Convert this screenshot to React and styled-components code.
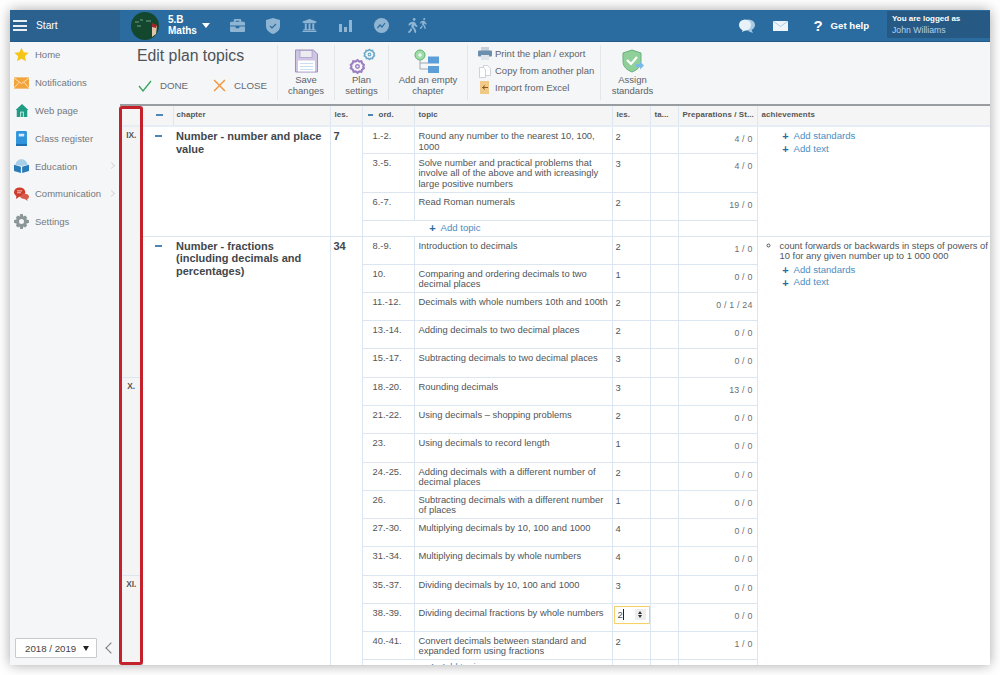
import React from 'react';
import styled, { createGlobalStyle } from 'styled-components';
import { FaBriefcase, FaUniversity, FaWalking } from 'react-icons/fa';

const Global = createGlobalStyle`
  html, body { margin: 0; padding: 0; background: #fff; }
  body { font-family: "Liberation Sans", Arial, sans-serif; color: #444; overflow: hidden; }
  * { box-sizing: border-box; }
`;

const Page = styled.div`
  width: 1000px; height: 675px; padding: 10px; background: #fff;
`;
const Win = styled.div`
  position: relative; width: 980px; height: 655px; display: flex; flex-direction: column;
  overflow: hidden; background: #fff; box-shadow: 0 0 12px rgba(0,0,0,.35);
`;
const TopBar = styled.header`
  flex: 0 0 32px; display: flex; align-items: stretch; background: #2b6ca0; color: #fff;
  border-bottom: 1px solid #235b88;
`;
const StartBox = styled.div`
  width: 110px; display: flex; align-items: center; gap: 9px; padding-left: 3px;
  background: #2a618f; font-size: 10.2px;
`;
const Burger = styled.span`
  width: 14px; height: 11px; border-top: 2px solid #e8f0f6; border-bottom: 2px solid #e8f0f6; position: relative;
  &::after { content: ""; position: absolute; left: 0; right: 0; top: 2.5px; height: 2px; background: #e8f0f6; }
`;
const ClassBox = styled.div`
  display: flex; align-items: center; margin-left: 11px;
`;
const ClassName = styled.div`
  margin-left: 9px; font-size: 10px; font-weight: 700; line-height: 10.5px; width: 34px;
`;
const Caret = styled.span`
  width: 0; height: 0; border-left: 4.5px solid transparent; border-right: 4.5px solid transparent;
  border-top: 5px solid #fff; margin-right: 17px;
`;
const NavIcons = styled.div`
  display: flex; align-items: center; gap: 16px; color: #8fb5d3;
`;
const NavSlot = styled.span`
  width: 20px; display: flex; justify-content: center;
`;
const RightBar = styled.div`
  margin-left: auto; display: flex; align-items: center;
`;
const HelpLabel = styled.span`
  display: flex; align-items: center; gap: 8px; font-size: 9.6px; font-weight: 700; margin: 0 18px 0 25px;
`;
const QMark = styled.span`font-size: 15px;`;
const Logged = styled.div`
  width: 103px; height: 27px; margin-top: 1px; padding: 3px 0 0 5px; background: #265a84; font-size: 8px; line-height: 10.5px;
  font-weight: 700; align-self: flex-start;
`;
const LoggedName = styled.div`
  font-weight: 400; color: #b4d0e8; font-size: 8.7px;
`;

const Body = styled.div`
  flex: 1; display: flex; min-height: 0;
`;
const Side = styled.aside`
  width: 110px; flex: none; background: #f5f6f8; display: flex; flex-direction: column; position: relative;
`;
const MenuList = styled.nav`
  margin-top: -1px;
`;
const MenuItem = styled.div`
  height: 27.8px; display: flex; align-items: center; padding-left: 3px; font-size: 9.5px; color: #727980; position: relative;
`;
const MenuIcon = styled.span`
  width: 17px; height: 17px; display: flex; align-items: center; justify-content: center; margin-right: 5px;
`;
const Chevron = styled.span`
  position: absolute; right: 6px; top: 11px; width: 5px; height: 5px; border-top: 1px solid #d5d8db; border-right: 1px solid #d5d8db; transform: rotate(45deg);
`;
const SideFoot = styled.div`
  margin-top: auto; display: flex; align-items: center; gap: 6px; padding: 0 0 7px 5px;
`;
const YearSelect = styled.div`
  width: 82px; height: 20px; border: 1px solid #c8cbce; background: #fff; font-size: 9.7px; color: #444;
  display: flex; align-items: center; justify-content: space-between; padding: 0 7px 0 9px; border-radius: 1px;
`;
const SmallCaret = styled.span`
  width: 0; height: 0; border-left: 3px solid transparent; border-right: 3px solid transparent; border-top: 5px solid #222;
`;
const Collapse = styled.span`
  display: block; width: 8px; height: 8px; margin-left: 4px; border-left: 1.5px solid #6f7b85; border-bottom: 1.5px solid #6f7b85; transform: rotate(45deg);
`;

const Main = styled.main`
  flex: 1; min-width: 0; display: flex; flex-direction: column;
`;
const Toolbar = styled.div`
  flex: 0 0 64px; background: #f5f6f8; border-bottom: 2px solid #9a9da0; display: flex; padding-top: 3px; padding-bottom: 4px;
`;
const TitleGroup = styled.div`
  width: 157px; padding: 1px 0 0 17px; flex: none;
`;
const Title = styled.div`
  font-size: 15.8px; line-height: 20px; color: #4d5357;
`;
const Actions = styled.div`
  display: flex; align-items: center; gap: 25px; margin-top: 13px; padding-left: 1px; font-size: 9.7px; color: #646a70;
`;
const Action = styled.span`
  display: flex; align-items: center; gap: 8px;
`;
const ToolGroup = styled.div`
  border-left: 1px solid #e4e6e9; display: flex; flex-direction: column; align-items: center; flex: none;
  width: ${p => p.$w}px; font-size: 9.5px; line-height: 10.5px; color: #5d6369; text-align: center; padding-top: 4px;
`;
const ToolIcon = styled.div`
  height: 24px; display: flex; align-items: center; justify-content: center; margin-bottom: 2px; position: relative;
  width: ${p => p.$w ? p.$w + 'px' : 'auto'};
`;
const GearSpot = styled.span`
  position: absolute; display: flex;
  ${p => p.$big ? 'left: 0; bottom: -2px;' : 'right: -1px; top: -1px;'}
`;
const ListGroup = styled.div`
  border-left: 1px solid #e4e6e9; width: 133px; flex: none; display: flex; flex-direction: column; padding: 0 0 0 10px;
`;
const ListRow = styled.div`
  height: 17px; display: flex; align-items: center; gap: 3px; font-size: 9.5px; color: #5d6369; white-space: nowrap;
`;

const TableWrap = styled.div`
  flex: 1; min-height: 0; overflow: hidden;
`;
const Grid = styled.table`
  table-layout: fixed; border-collapse: collapse; width: 871px; margin-left: -1px;
`;
const Th = styled.th`
  height: 20px; background: #f5f5f6; font-size: 7.9px; font-weight: 700; letter-spacing: .1px; color: #555; text-align: left;
  padding: 0 0 3px ${p => p.$pl ?? 4}px; border-right: 1px solid #dde7f2; border-bottom: 2px solid #e6edf5;
  white-space: nowrap; overflow: hidden; text-overflow: ellipsis;
`;
const Td = styled.td`
  border: 1px solid #dbe6f1; vertical-align: top; font-size: 9.4px; line-height: 10.6px; color: #50555a; padding: 4px 2px 0 4px;
  height: ${p => p.$h}px;
`;
const MarkerTd = styled(Td)`
  background: #f4f4f5; font-size: 8.3px; font-weight: 700; text-align: center; color: #555; padding: 3px 0 0 2px;
  border-left: 0;
`;
const MinusCell = styled(Td)`
  border-right: 0;
`;
const TitleCell = styled(Td)`
  border-left: 0; padding: 3px 2px 0 3px;
`;
const LesTitleCell = styled(Td)`
  padding: 3px 2px 0 3px;
`;
const Minus = styled.span`
  display: block; width: 7px; height: 2px; background: #4a86b8; margin: ${p => p.$m || '4px auto 0'};
`;
const ChapterTitle = styled.div`
  font-size: 11px; font-weight: 700; line-height: 12.6px; color: #42474b;
`;
const OrdTd = styled(Td)`
  padding-left: 10px; color: #555;
`;
const PrepTd = styled(Td)`
  text-align: right; padding: 7px 4px 0 0; color: #6a6f74; font-size: 8.8px; letter-spacing: .2px;
`;
const LesTd = styled(Td)`
  padding: 5px 2px 0 3px;
`;
const AddCell = styled(Td)`
  padding: 1px 0 0;
`;
const LinksCell = styled(Td)`
  padding-top: 3px;
`;
const AddLink = styled.div`
  display: flex; align-items: center; gap: 4px; color: #4c8dbf; font-size: 9.6px; line-height: 12.6px;
  padding-left: ${p => p.$pl || 20}px;
`;
const Plus = styled.span`
  color: #2b6ca0; font-weight: 700; font-size: 11px; width: 8px; line-height: 10px; text-align: center;
`;
const Bullet = styled.ul`
  margin: 1px 0 2px 0; padding: 0 0 0 18px; font-size: 9.4px; line-height: 10.6px; list-style: circle; width: 232px; color: #50555a;
`;
const HeadOrd = styled.span`
  display: inline-flex; align-items: center; gap: 6px; padding-left: 1px;
`;
const HeadMinus = styled.span`
  display: inline-block; width: 5px; height: 1.5px; background: #4a86b8;
`;
const NumInput = styled.div`
  width: 36px; height: 18px; margin: -3px 0 0 -2px; border: 1px solid #f6d169; border-radius: 1px; display: flex; align-items: center;
  justify-content: space-between; padding: 0 3px; background: #fff; box-shadow: 0 0 1px #f6d169;
`;
const Caretline = styled.span`
  font-size: 9.4px; border-right: 1px solid #222; line-height: 11px;
`;
const Spin = styled.span`
  width: 11px; height: 11px; background: #eee; display: flex; flex-direction: column; align-items: center; justify-content: center; gap: 1px;
  &::before { content: ""; border-left: 2.5px solid transparent; border-right: 2.5px solid transparent; border-bottom: 3px solid #333; }
  &::after { content: ""; border-left: 2.5px solid transparent; border-right: 2.5px solid transparent; border-top: 3px solid #333; }
`;
const RedFrame = styled.div`
  position: absolute; left: 109px; top: 96px; width: 24px; height: 559px; border: 3px solid #c4212b; border-radius: 3px; pointer-events: none;
`;
const ShiftedSvg = styled.svg`
  margin-left: 18px;
`;

const menu = [
  ['Home', <svg width="15" height="15" viewBox="0 0 24 24"><path fill="#f5c518" d="M12 1l3.4 7.4 8 .9-6 5.4 1.7 8L12 18.6 4.900 22.700l1.700-8-6-5.400 8-.9z"/></svg>],
  ['Notifications', <svg width="15" height="12" viewBox="0 0 24 18"><rect width="24" height="18" fill="#f3a33c"/><path d="M0 1l12 9 12-9M0 17l8-9M24 17l-8-9" stroke="#fde3b6" strokeWidth="1.500" fill="none"/></svg>],
  ['Web page', <svg width="14" height="15" viewBox="0 0 24 24"><path fill="#1f9c83" d="M12 1l11 10h-2v12H3V11H1z"/><path fill="#dff3ee" d="M9 14h6v9H9z"/><path fill="#1f9c83" d="M10.500 15.500h3V23h-3z"/></svg>],
  ['Class register', <svg width="11" height="15" viewBox="0 0 16 22"><rect width="16" height="22" rx="2" fill="#2f94dc"/><rect x="4" y="4" width="8" height="4" fill="#d6ebfa"/><rect x="0" y="19" width="16" height="3" fill="#1e6fae"/></svg>],
  ['Education', <svg width="15" height="14" viewBox="0 0 24 22"><path fill="#a7cfe9" d="M2 9C3 3 8 0 12 0s9 3 10 9l-10 2z"/><path fill="#2a7cb8" d="M0 9l11 3v10L0 19zM24 9l-11 3v10l11-3z"/></svg>, true],
  ['Communication', <svg width="15" height="14" viewBox="0 0 24 22"><ellipse cx="9" cy="8" rx="9" ry="7.500" fill="#cf3b2c"/><path d="M4 13l-1 6 6-4z" fill="#cf3b2c"/><path fill="#d85a49" d="M14 10c6 0 10 2 10 5s-2 4-3 4l1 3-5-3c-4 0-7-2-7-4z"/><path stroke="#f6d5cf" strokeWidth="1.500" d="M5 6h8M5 9h6"/></svg>, true],
  ['Settings', <svg width="15" height="15" viewBox="0 0 24 24"><path fill="#8a9697" fillRule="evenodd" d="M10 0h4l1 4 3-1.500 3 3L19.500 8.500 24 10v4l-4.500 1.500L21 18.500l-3 3-3-1.500-1 4h-4l-1-4-3 1.500-3-3 1.500-3L0 14v-4l4.500-1.500L3 5.500l3-3L9 4zM12 8a4 4 0 100 8 4 4 0 000-8z"/></svg>],
];

const PlusRow = ({ children, pl }) => <AddLink $pl={pl}><Plus>+</Plus>{children}</AddLink>;

const Gear = ({ c, s }) => (
  <svg width={s} height={s} viewBox="0 0 24 24"><path fill="none" stroke={c} strokeWidth="3" d="M12 3l2.500 2 3-.5 1 3 2.500 2-1 2.500 1 2.500-2.500 2-1 3-3-.5-2.500 2-2.500-2-3 .5-1-3L2.500 14.500l1-2.500-1-2.500 2.500-2 1-3 3 .5z"/><circle cx="12" cy="12" r="2.500" fill="none" stroke={c} strokeWidth="2"/></svg>
);

const ch1 = [
  ['1.-2.', 'Round any number to the nearest 10, 100, 1000', 2, '4 / 0', 27],
  ['3.-5.', 'Solve number and practical problems that involve all of the above and with icreasingly large positive numbers', 3, '4 / 0', 39],
  ['6.-7.', 'Read Roman numerals', 2, '19 / 0', 28],
];
const ch2 = [
  ['8.-9.', 'Introduction to decimals', 2, '1 / 0', 28],
  ['10.', 'Comparing and ordering decimals to two decimal places', 1, '0 / 0', 28],
  ['11.-12.', 'Decimals with whole numbers 10th and 100th', 2, '0 / 1 / 24', 28],
  ['13.-14.', 'Adding decimals to two decimal places', 2, '0 / 0', 28],
  ['15.-17.', 'Subtracting decimals to two decimal places', 3, '0 / 0', 29],
  ['18.-20.', 'Rounding decimals', 3, '13 / 0', 28],
  ['21.-22.', 'Using decimals – shopping problems', 2, '0 / 0', 28],
  ['23.', 'Using decimals to record length', 1, '0 / 0', 29],
  ['24.-25.', 'Adding decimals with a different number of decimal places', 2, '0 / 0', 28],
  ['26.', 'Subtracting decimals with a different number of places', 1, '0 / 0', 28],
  ['27.-30.', 'Multiplying decimals by 10, 100 and 1000', 4, '0 / 0', 28],
  ['31.-34.', 'Multiplying decimals by whole numbers', 4, '0 / 0', 29],
  ['35.-37.', 'Dividing decimals by 10, 100 and 1000', 3, '0 / 0', 28],
  ['38.-39.', 'Dividing decimal fractions by whole numbers', 2, '0 / 0', 28, true],
  ['40.-41.', 'Convert decimals between standard and expanded form using fractions', 2, '1 / 0', 28],
];

const TopicCells = ({ r }) => (
  <>
    <OrdTd $h={r[4]}>{r[0]}</OrdTd>
    <Td>{r[1]}</Td>
    <LesTd>{r[5] ? <NumInput><Caretline>{r[2]}</Caretline><Spin /></NumInput> : r[2]}</LesTd>
    <Td />
    <PrepTd>{r[3]}</PrepTd>
  </>
);

const AddTopicRow = ({ h }) => (
  <tr>
    <AddCell $h={h} colSpan={2}><PlusRow pl={66}>Add topic</PlusRow></AddCell>
    <Td /><Td /><Td />
  </tr>
);

export default function App() {
  return (
    <Page>
      <Global />
      <Win>
        <TopBar>
          <StartBox><Burger /> Start</StartBox>
          <ClassBox>
            <svg width="28" height="28" viewBox="0 0 28 28"><circle cx="14" cy="14" r="14" fill="#13482f"/><path d="M4 10h4M9 8h3M15 9h5M6 14h4" stroke="#8fb79f" strokeWidth=".8"/><path d="M21 12l5 2-1 8-4 3z" fill="#e0c4ae"/><path d="M21 11l5 2-1 3-4-1z" fill="#a8242b"/></svg>
            <ClassName>5.B<br />Maths</ClassName>
            <Caret />
            <NavIcons>
              <NavSlot><FaBriefcase size={15} /></NavSlot>
              <NavSlot><svg width="14" height="16" viewBox="0 0 14 16"><path fill="currentColor" d="M7 0l7 2v6c0 4-3 6.500-7 8-4-1.500-7-4-7-8V2z"/><path d="M4 8l2 2 4-4" stroke="#2b6ca0" strokeWidth="1.200" fill="none"/></svg></NavSlot>
              <NavSlot><FaUniversity size={15} /></NavSlot>
              <NavSlot><svg width="13" height="13" viewBox="0 0 13 13"><path fill="currentColor" d="M0 5h3v8H0zM5 8h3v5H5zM10 1h3v12h-3z"/></svg></NavSlot>
              <NavSlot><svg width="15" height="15" viewBox="0 0 15 15"><circle cx="7.500" cy="7.500" r="7.500" fill="currentColor"/><path d="M3.500 10l2.500-3 2 2 3-4" stroke="#2b6ca0" strokeWidth="1.200" fill="none"/></svg></NavSlot>
              <NavSlot><FaWalking size={15} /><FaWalking size={11} /></NavSlot>
            </NavIcons>
          </ClassBox>
          <RightBar>
            <svg width="16" height="14" viewBox="0 0 16 14"><ellipse cx="9.500" cy="6" rx="6.500" ry="5.500" fill="#a9cbe4"/><path d="M12 10l2 4-5-2z" fill="#a9cbe4"/><ellipse cx="6" cy="6" rx="6" ry="5.500" fill="#e9f2f8"/><path d="M4 10l-1 3 4-2z" fill="#e9f2f8"/></svg>
            <ShiftedSvg width="15" height="10" viewBox="0 0 15 10"><rect width="15" height="10" fill="#eef5fa"/><path d="M0 0l7.500 5.500L15 0" stroke="#9fc0da" strokeWidth=".8" fill="none"/></ShiftedSvg>
            <HelpLabel><QMark>?</QMark>Get help</HelpLabel>
            <Logged>You are logged as<LoggedName>John Williams</LoggedName></Logged>
          </RightBar>
        </TopBar>
        <Body>
          <Side>
            <MenuList>
              {menu.map(([t, ic, ch]) => (
                <MenuItem key={t}><MenuIcon>{ic}</MenuIcon>{t}{ch && <Chevron />}</MenuItem>
              ))}
            </MenuList>
            <SideFoot><YearSelect>2018 / 2019<SmallCaret /></YearSelect><Collapse /></SideFoot>
          </Side>
          <Main>
            <Toolbar>
              <TitleGroup>
                <Title>Edit plan topics</Title>
                <Actions>
                  <Action>
                    <svg width="14" height="12" viewBox="0 0 14 12"><path d="M1 6l4 5 8-10" stroke="#35a55c" strokeWidth="1.300" fill="none"/></svg> DONE
                  </Action>
                  <Action>
                    <svg width="13" height="13" viewBox="0 0 12 12"><path d="M1 1l10 10M11 1L1 11" stroke="#f0953a" strokeWidth="1.300" fill="none"/></svg> CLOSE
                  </Action>
                </Actions>
              </TitleGroup>
              <ToolGroup $w={57}>
                <ToolIcon><svg width="23" height="24" viewBox="0 0 23 23"><path fill="#cfc4e4" stroke="#9c8fbd" d="M.5.500h18l4 4v18H.5z"/><rect x="5" y="1" width="12" height="7" fill="#ecebf2" stroke="#9c8fbd" strokeWidth=".6"/><rect x="3" y="11" width="17" height="11" fill="#fff"/><path d="M5 14h13M5 17h13M5 20h13" stroke="#b9d7ee" strokeWidth=".8"/></svg></ToolIcon>
                Save<br />changes
              </ToolGroup>
              <ToolGroup $w={54}>
                <ToolIcon $w={26}>
                  <GearSpot><Gear c="#6ba8c9" s={13} /></GearSpot>
                  <GearSpot $big><Gear c="#9c7fc0" s={17} /></GearSpot>
                </ToolIcon>
                Plan<br />settings
              </ToolGroup>
              <ToolGroup $w={79}>
                <ToolIcon><svg width="28" height="25" viewBox="0 0 28 25"><circle cx="6" cy="6" r="5" fill="#9fdcaa" stroke="#5db36e"/><path d="M4 6h4M6 4v4" stroke="#fff"/><path d="M6 11v9h8M6 14h8" stroke="#9aa7b0" fill="none"/><rect x="14" y="7.500" width="11" height="7" fill="#5c9fd8"/><rect x="14" y="17" width="11" height="7" fill="#5c9fd8"/></svg></ToolIcon>
                Add an empty<br />chapter
              </ToolGroup>
              <ListGroup>
                <ListRow><svg width="14" height="13" viewBox="0 0 14 13"><rect x="3" y="0" width="8" height="4" fill="#c8d0da"/><rect y="3.500" width="14" height="6" rx="1" fill="#6c8fae"/><rect x="3" y="8" width="8" height="5" fill="#dfe5ea"/></svg>Print the plan / export</ListRow>
                <ListRow><svg width="14" height="14" viewBox="0 0 14 14"><path d="M5.500 1.500h4l3 3v7h-7z" fill="#fff" stroke="#b9c1c9" strokeWidth=".7"/><path d="M1.500 3.500h4l2 2v8h-6z" fill="#fff" stroke="#b9c1c9" strokeWidth=".7"/></svg>Copy from another plan</ListRow>
                <ListRow><svg width="14" height="13" viewBox="0 0 14 13"><rect x="2" y="0" width="9" height="13" fill="#f0c987"/><path d="M10 6.500H4.500M7 4.500l-2.500 2 2.500 2" stroke="#8a5a1d" strokeWidth="1" fill="none"/></svg>Import from Excel</ListRow>
              </ListGroup>
              <ToolGroup $w={64}>
                <ToolIcon><svg width="24" height="25" viewBox="0 0 24 25"><path fill="#8fd09a" stroke="#69b07b" d="M11 1l9 3v8c0 6-4 9-9 11-5-2-9-5-9-11V4z"/><path d="M6 11l4 4 6-7" stroke="#fff" strokeWidth="2.200" fill="none"/><path d="M15 15h4v-2.500l4 4-4 4V18h-4z" fill="#79b9e8"/></svg></ToolIcon>
                Assign<br />standards
              </ToolGroup>
            </Toolbar>
            <TableWrap>
              <Grid>
                <colgroup>
                  <col style={{ width: 23 }} /><col style={{ width: 31 }} /><col style={{ width: 157 }} /><col style={{ width: 32 }} />
                  <col style={{ width: 52 }} /><col style={{ width: 198 }} /><col style={{ width: 38 }} /><col style={{ width: 28 }} />
                  <col style={{ width: 79 }} /><col style={{ width: 234 }} />
                </colgroup>
                <thead>
                  <tr>
                    <Th />
                    <Th><Minus $m="2px auto 0" /></Th>
                    <Th $pl={3}>chapter</Th>
                    <Th>les.</Th>
                    <Th><HeadOrd><HeadMinus />ord.</HeadOrd></Th>
                    <Th>topic</Th>
                    <Th>les.</Th>
                    <Th>ta...</Th>
                    <Th>Preparations / St...</Th>
                    <Th>achievements</Th>
                  </tr>
                </thead>
                <tbody>
                  <tr>
                    <MarkerTd rowSpan={9}>IX.</MarkerTd>
                    <MinusCell rowSpan={4}><Minus /></MinusCell>
                    <TitleCell rowSpan={4}><ChapterTitle>Number - number and place value</ChapterTitle></TitleCell>
                    <LesTitleCell rowSpan={4}><ChapterTitle>7</ChapterTitle></LesTitleCell>
                    <TopicCells r={ch1[0]} />
                    <LinksCell rowSpan={4}><PlusRow>Add standards</PlusRow><PlusRow>Add text</PlusRow></LinksCell>
                  </tr>
                  <tr><TopicCells r={ch1[1]} /></tr>
                  <tr><TopicCells r={ch1[2]} /></tr>
                  <AddTopicRow h={16} />
                  {ch2.map((r, i) => (
                    <tr key={r[0]}>
                      {i === 5 && <MarkerTd rowSpan={7}>X.</MarkerTd>}
                      {i === 12 && <MarkerTd rowSpan={4}>XI.</MarkerTd>}
                      {i === 0 && <>
                        <MinusCell rowSpan={16}><Minus /></MinusCell>
                        <TitleCell rowSpan={16}><ChapterTitle>Number - fractions (including decimals and percentages)</ChapterTitle></TitleCell>
                        <LesTitleCell rowSpan={16}><ChapterTitle>34</ChapterTitle></LesTitleCell>
                      </>}
                      <TopicCells r={r} />
                      {i === 0 && (
                        <LinksCell rowSpan={16}>
                          <Bullet><li>count forwards or backwards in steps of powers of 10 for any given number up to 1 000 000</li></Bullet>
                          <PlusRow>Add standards</PlusRow><PlusRow>Add text</PlusRow>
                        </LinksCell>
                      )}
                    </tr>
                  ))}
                  <AddTopicRow h={14} />
                </tbody>
              </Grid>
            </TableWrap>
          </Main>
        </Body>
        <RedFrame />
      </Win>
    </Page>
  );
}
